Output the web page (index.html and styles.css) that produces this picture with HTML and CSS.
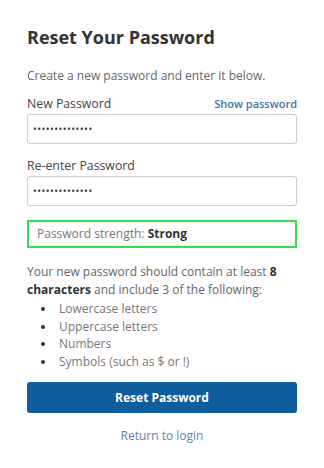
FILE: index.html
```html
<!DOCTYPE html>
<html lang="en">
<head>
  <meta charset="UTF-8" />
  <meta name="viewport" content="width=device-width, initial-scale=1.0"/>
  <title>Reset Your Password</title>
  <link rel="stylesheet" href="styles.css">
</head>
<body>
  <div class="reset-box">
    <h1 class="reset-title">Reset Your Password</h1>
    <p class="intro">Create a new password and enter it below.</p>

    <div class="field-head">
      <label for="pw1">New Password</label>
      <a href="#" class="show-link">Show password</a>
    </div>
    <input id="pw1" type="password" class="pw-input" value="abcdefghijklmn" />

    <div class="field-head">
      <label for="pw2">Re-enter Password</label>
    </div>
    <input id="pw2" type="password" class="pw-input" value="abcdefghijklmn" />

    <div class="strength">Password strength: <b>Strong</b></div>

    <p class="rules">Your new password should contain at least <b>8 characters</b> and include 3 of the following:</p>
    <ul class="rule-list">
      <li>Lowercase letters</li>
      <li>Uppercase letters</li>
      <li>Numbers</li>
      <li>Symbols (such as $ or !)</li>
    </ul>

    <button class="reset-btn">Reset Password</button>
    <a href="#" class="return-link">Return to login</a>
  </div>
</body>
</html>
```

FILE: styles.css
```css
body {
  margin: 0;
  padding: 0;
  background: #fff;
  font-family: "Open Sans", sans-serif;
  color: #666;
}

.reset-box {
  padding: 24px 27px 0 27px;
}

.reset-title {
  margin: 0;
  font-size: 18px;
  font-weight: 700;
  color: #333;
  line-height: 26px;
}

.intro {
  margin: 17px 0 0 0;
  font-size: 12px;
  line-height: 18px;
}

.field-head {
  display: flex;
  justify-content: space-between;
  align-items: baseline;
  margin-top: 13px;
  height: 19px;
}

.intro + .field-head {
  margin-top: 10px;
}

.field-head label {
  font-size: 12.3px;
  color: #444;
}

.show-link {
  font-size: 11px;
  font-weight: 600;
  color: #3a74ad;
  text-decoration: none;
}

.pw-input {
  display: block;
  box-sizing: border-box;
  width: 100%;
  height: 30px;
  margin-top: 0;
  padding: 0 5px;
  border: 1px solid #ccc;
  border-radius: 3px;
  font-family: "Open Sans", sans-serif;
  font-size: 10px;
  color: #333;
  letter-spacing: 0.5px;
}

.strength {
  box-sizing: border-box;
  height: 28px;
  margin-top: 14px;
  padding: 0 8px;
  border: 2px solid #33e050;
  font-size: 12px;
  line-height: 24px;
  color: #777;
}

.strength b,
.rules b {
  color: #333;
}

.rules {
  margin: 15px 0 0 0;
  font-size: 12px;
  line-height: 18px;
}

.rule-list {
  margin: 1px 0 0 0;
  padding-left: 29px;
  font-size: 12px;
  line-height: 17.7px;
  color: #777;
}

.rule-list li {
  padding-left: 3px;
}

.rule-list li::marker {
  color: #333;
}

.reset-btn {
  display: block;
  width: 100%;
  height: 31px;
  margin-top: 11px;
  border: none;
  border-radius: 3px;
  background: #0e5d9c;
  color: #fff;
  font-family: "Open Sans", sans-serif;
  font-size: 12px;
  font-weight: 700;
  cursor: pointer;
}

.return-link {
  display: block;
  margin-top: 14px;
  text-align: center;
  font-size: 12px;
  color: #5a86b5;
  text-decoration: none;
}
```
